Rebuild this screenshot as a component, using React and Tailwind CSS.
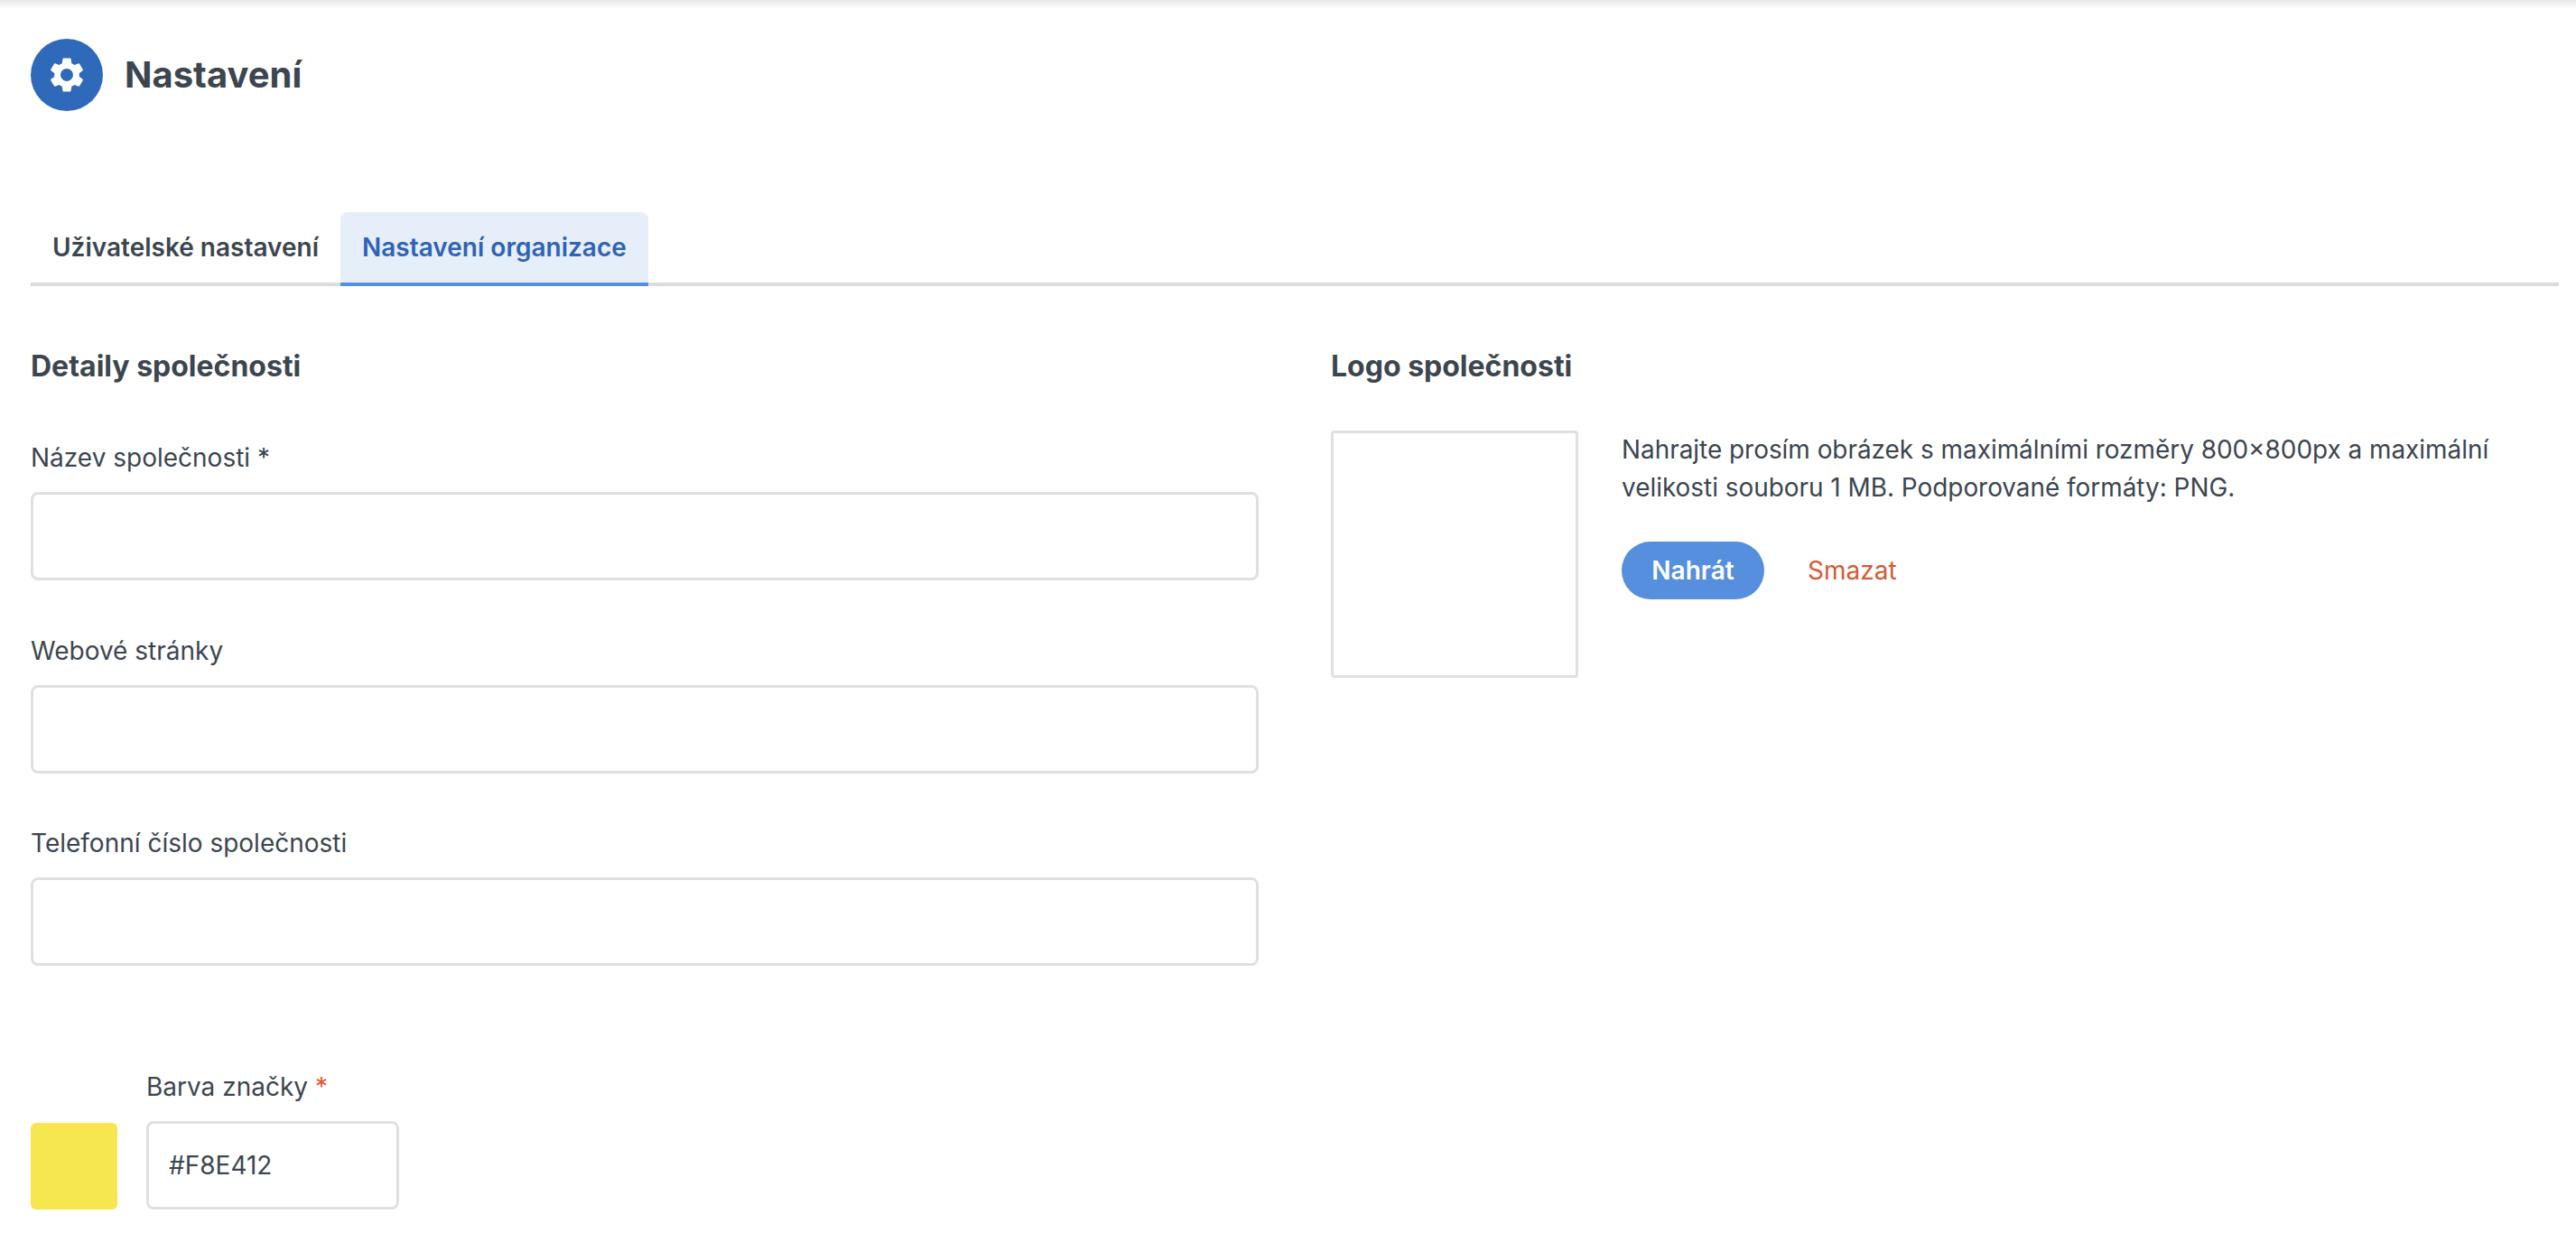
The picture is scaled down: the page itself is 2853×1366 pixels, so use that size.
import React from 'react';
import { MdSettings } from 'react-icons/md';

const Field = ({ label, className = '' }) => (
    <div className={className}>
        <label className="block text-[28px] leading-[40px] text-[#3c4650]">{label}</label>
        <input type="text" className="mt-[18px] block h-[98px] w-full rounded-lg border-[3px] border-[#e0e0e0] bg-white" />
    </div>
);

export default function App() {
    return (
        <div className="h-[1366px] overflow-hidden bg-white font-['Inter',sans-serif] text-[#3c4650]">
            <div className="h-[10px] bg-gradient-to-b from-[#e8e8e8] to-white" />

            <div className="mt-[33px] flex items-center pl-[34px]">
                <div className="flex h-[80px] w-[80px] items-center justify-center rounded-full bg-[#2f69b9] text-white">
                    <MdSettings size={46} />
                </div>
                <h1 className="ml-[24px] text-[40px] font-bold leading-[80px]">Nastavení</h1>
            </div>

            <div className="ml-[34px] mr-[19px] mt-[112px] flex h-[82px] border-b-[4px] border-[#dbdbdb]">
                <div className="flex h-[82px] items-center rounded-t-lg px-[24px] pb-[4px] text-[28px] font-semibold">Uživatelské nastavení</div>
                <div className="flex h-[82px] items-center rounded-t-lg border-b-[4px] border-[#558fdd] bg-[#e6eefa] px-[24px] text-[28px] font-semibold text-[#2f63b5]">Nastavení organizace</div>
            </div>

            <div className="mt-[67px] flex pl-[34px]">
                <div className="w-[1360px]">
                    <h2 className="text-[32px] font-bold leading-[44px]">Detaily společnosti</h2>
                    <Field label="Název společnosti *" className="mt-[59px]" />
                    <Field label="Webové stránky" className="mt-[58px]" />
                    <Field label="Telefonní číslo společnosti" className="mt-[57px]" />

                    <div className="mt-[114px] flex items-end">
                        <div className="h-[96px] w-[96px] rounded-md bg-[#f6e650]" />
                        <div className="ml-[32px]">
                            <label className="block text-[28px] leading-[40px]">Barva značky <span className="text-[#dc5b35]">*</span></label>
                            <input type="text" defaultValue="#F8E412" className="mt-[18px] block h-[98px] w-[280px] rounded-lg border-[3px] border-[#e0e0e0] bg-white px-[22px] text-[28px] text-[#3c4650]" />
                        </div>
                    </div>
                </div>

                <div className="ml-[80px] flex-1">
                    <h2 className="text-[32px] font-bold leading-[44px]">Logo společnosti</h2>
                    <div className="mt-[49px] flex">
                        <div className="h-[274px] w-[274px] shrink-0 rounded-[4px] border-[3px] border-[#e0e0e0] bg-white" />
                        <div className="ml-[48px] w-[1000px]">
                            <p className="text-[27.9px] leading-[42px]">Nahrajte prosím obrázek s maximálními rozměry 800×800px a maximální velikosti souboru 1 MB. Podporované formáty: PNG.</p>
                            <div className="mt-[39px] flex items-center">
                                <button className="h-[64px] w-[158px] rounded-full bg-[#558fdd] text-[28px] font-semibold text-white">Nahrát</button>
                                <button className="ml-[48px] text-[28px] text-[#d65a35]">Smazat</button>
                            </div>
                        </div>
                    </div>
                </div>
            </div>
        </div>
    );
}
